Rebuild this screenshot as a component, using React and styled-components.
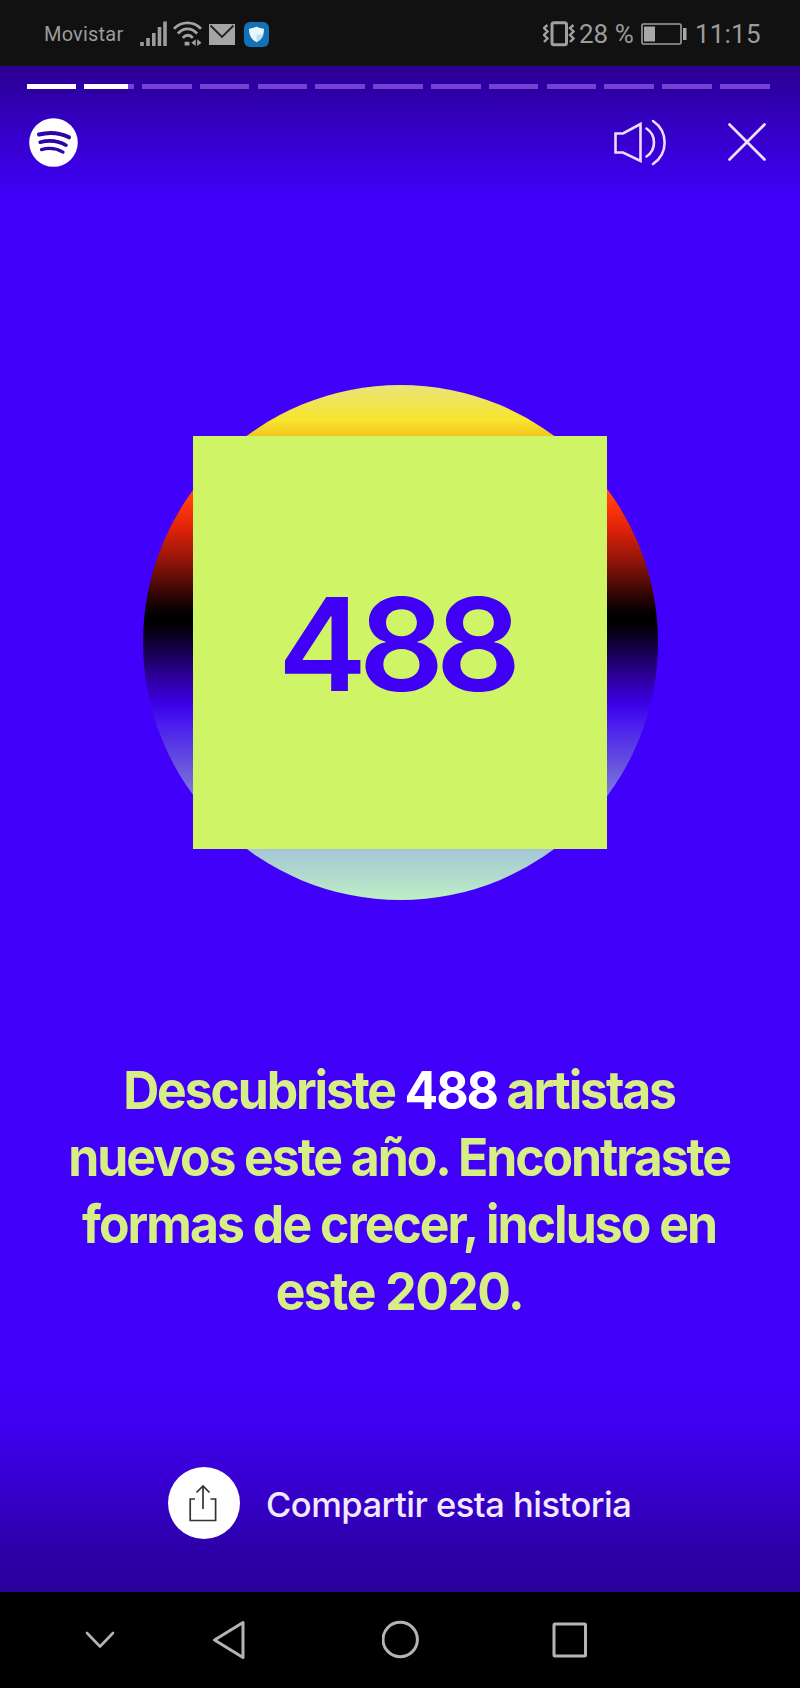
import React from "react";
import styled, { createGlobalStyle } from "styled-components";

const GlobalStyle = createGlobalStyle`
  * { box-sizing: border-box; }
  body { margin: 0; background: #000; }
`;

const Phone = styled.div`
  width: 800px;
  height: 1688px;
  display: flex;
  flex-direction: column;
  overflow: hidden;
  font-family: Inter, "Liberation Sans", sans-serif;
`;

const StatusBar = styled.header`
  height: 66px;
  flex: none;
  display: flex;
  align-items: center;
  justify-content: space-between;
  padding: 2px 37px 0 44px;
  background: #111;
  color: #9c9c9c;
  font-family: Roboto, sans-serif;
`;

const StatusGroup = styled.div`
  display: flex;
  align-items: center;
  gap: ${(p) => p.$gap}px;
`;

const Carrier = styled.span`
  width: 89px;
  font-size: 20px;
  line-height: 24px;
  letter-spacing: 0.2px;
`;

const StatusText = styled.span`
  width: ${(p) => p.$width}px;
  font-size: 26px;
  line-height: 30px;
  white-space: nowrap;
  letter-spacing: ${(p) => p.$spacing || 0}px;
`;

const Icon = styled.svg`
  display: block;
  flex: none;
  fill: none;
`;

const Story = styled.main`
  flex: 1;
  display: flex;
  flex-direction: column;
  align-items: center;
  background:
    linear-gradient(to bottom, #2a0092 0, #2d00a5 24px, #3700cf 75px, rgba(64, 0, 250, 0) 135px) top / 100% 135px no-repeat,
    linear-gradient(to top, #29009a 0, #2c00a8 40px, #3600cc 100px, #3e00ee 165px, rgba(64, 0, 250, 0) 215px) bottom / 100% 215px no-repeat,
    #4000fa;
`;

const Progress = styled.div`
  width: 743px;
  height: 5px;
  margin: 18px 4px 0 0;
  display: grid;
  grid-template-columns: repeat(13, 1fr);
  column-gap: 8.3px;
`;

const Segment = styled.div`
  background: linear-gradient(
    to right,
    #fff ${(p) => p.$fill}%,
    #7442d0 ${(p) => p.$fill}%
  );
`;

const Toolbar = styled.div`
  width: 100%;
  height: 49px;
  margin-top: 28.5px;
  padding: 0 34.5px 0 29px;
  display: flex;
  align-items: center;
`;

const Actions = styled.div`
  margin-left: auto;
  display: flex;
  align-items: center;
  gap: 61px;
`;

const Disc = styled.div`
  width: 515px;
  height: 515px;
  margin-top: 218px;
  padding-top: 1px;
  border-radius: 50%;
  display: flex;
  align-items: center;
  justify-content: center;
  background: linear-gradient(
    to bottom,
    #ebe37a 0%,
    #f7e52e 6.8%,
    #f4c51e 10%,
    #ff6a14 17%,
    #ff3a0c 23%,
    #e32408 27.5%,
    #8c1408 34.5%,
    #2c0503 41%,
    #000 44.5%,
    #000 46.5%,
    #12003c 50.5%,
    #2a0090 56%,
    #3d00e8 62%,
    #4a1eee 66%,
    #5c40e2 71%,
    #7468dc 77%,
    #a7c9d4 91%,
    #bdefc4 100%
  );
`;

const Card = styled.div`
  width: 414px;
  height: 413px;
  flex: none;
  display: flex;
  align-items: center;
  justify-content: center;
  background: #cff566;
`;

const Count = styled.span`
  color: #4000f5;
  font-size: 129px;
  line-height: 130px;
  font-weight: 630;
  letter-spacing: -8px;
  margin: 2px 0 0 -8px;
  transform: scaleX(1.035);
`;

const Message = styled.p`
  margin: 157px 0 0;
  text-align: center;
  color: #d6ee83;
  font-size: 52.5px;
  font-weight: 650;
  line-height: 67.3px;
`;

const Line = styled.span`
  display: block;
  white-space: nowrap;
  letter-spacing: ${(p) => p.$spacing}px;
  text-indent: ${(p) => p.$spacing}px;
  transform: scaleX(0.95);
`;

const Highlight = styled.strong`
  color: #fff;
  font-weight: 700;
`;

const ShareRow = styled.div`
  width: 100%;
  margin-top: auto;
  margin-bottom: 53px;
  padding-left: 168px;
  display: flex;
  align-items: center;
  gap: 26px;
`;

const ShareButton = styled.div`
  width: 72px;
  height: 72px;
  padding-right: 2px;
  border-radius: 50%;
  background: #fff;
  display: flex;
  align-items: center;
  justify-content: center;
`;

const ShareLabel = styled.span`
  color: #f3e9ff;
  font-size: 34.5px;
  font-weight: 500;
  line-height: 40px;
  letter-spacing: -0.5px;
  white-space: nowrap;
  padding-top: 3px;
`;

const NavBar = styled.nav`
  height: 96px;
  flex: none;
  padding: 0 0 1px 84px;
  display: flex;
  align-items: center;
  background: #000;
`;

const NavItem = styled.div`
  width: ${(p) => p.$width}px;
  display: flex;
`;

const BatteryIcon = styled(Icon)`
  margin-right: 2px;
`;

const VibrateIcon = styled(Icon)`
  margin-right: -2px;
`;

const ShieldIcon = styled(Icon)`
  margin-left: 2px;
`;

const wiggle = (x) => `M${x} 4 l-3.5 3 3.5 3.5 -3.5 3.5 3.5 3.5 -3.5 3.5`;

export default function App() {
  return (
    <>
      <GlobalStyle />
      <Phone>
        <StatusBar>
          <StatusGroup $gap={6.7}>
            <Carrier>Movistar</Carrier>
            <Icon width="27" height="26" viewBox="0 0 27 26" stroke="#9c9c9c" strokeWidth="3.6">
              <path d="M2 25v-4M8 25v-8M13.8 25V12M19.5 25V6M25 25V.5" />
            </Icon>
            <Icon width="29" height="26" viewBox="0 0 30 26" stroke="#a3a3a3" strokeWidth="2.9">
              <path d="M1 7.5C9-.5 21-.5 29 7.5M5 12.5c6-6.5 14-6.5 20 0M10 17c3.5-3.6 7.500-3.6 10.500 0" />
              <path d="M12 21h5v4h-5zM23.500 18.500v7l-4.500-3.500zM25 18.500v7l4.500-3.500z" fill="#a3a3a3" stroke="none" />
            </Icon>
            <Icon width="26" height="21" viewBox="0 0 26 21">
              <path fill="#a5a5a5" d="M0 0h26v21H0z" />
              <path stroke="#222" strokeWidth="1.800" d="M1.500 1.500 13 13 24.500 1.500" />
            </Icon>
            <ShieldIcon width="25" height="25" viewBox="0 0 25 25">
              <rect width="25" height="25" rx="6" fill="#1272b5" />
              <path fill="#e6f7ff" d="M12.500 4.500c2.500 1.500 5 2 7.500 2.200 0 6.300-2 10.500-7.500 13.500C7 17.200 5 13 5 6.700c2.500-.2 5-.7 7.500-2.200z" />
              <path fill="#b9e0f5" d="M12.500 12.500h7c-1 3.500-3.500 6-7 7.700z" />
            </ShieldIcon>
          </StatusGroup>
          <StatusGroup $gap={6}>
            <VibrateIcon width="32" height="26" viewBox="0 0 32 26" stroke="#a0a0a0">
              <rect x="9" y="1.800" width="14.500" height="22" rx="2" strokeWidth="3" />
              <path strokeWidth="2.400" d={wiggle(4.5)} />
              <path strokeWidth="2.400" d={wiggle(30.5)} />
            </VibrateIcon>
            <StatusText $width={56}>28 %</StatusText>
            <BatteryIcon width="46" height="22" viewBox="0 0 46 22" stroke="#a0a0a0">
              <rect x="1" y="1" width="39" height="20" rx="1.500" strokeWidth="1.600" />
              <path fill="#a8a8a8" stroke="none" d="M3 3.500h11v15H3zM42 5h3.500v12H42z" />
            </BatteryIcon>
            <StatusText $width={68} $spacing={0.2}>11:15</StatusText>
          </StatusGroup>
        </StatusBar>

        <Story>
          <Progress>
            {Array.from({ length: 13 }, (_, i) => (
              <Segment key={i} $fill={i === 0 ? 100 : i === 1 ? 89 : 0} />
            ))}
          </Progress>
          <Toolbar>
            <Icon width="49" height="49" viewBox="0 0 49 49" strokeLinecap="round">
              <circle cx="24.500" cy="24.500" r="24.300" fill="#fff" />
              <g stroke="#2c05a8">
                <path strokeWidth="4" d="M10 16.500c10.500-2.800 21-1.800 30 2.800" />
                <path strokeWidth="3.600" d="M11.200 24.300c9-2.500 18-1.500 25.800 2.900" />
                <path strokeWidth="3.200" d="M12.500 31.600c7.500-2.100 15-1.200 21.500 2.500" />
              </g>
            </Icon>
            <Actions>
              <Icon width="54" height="48" viewBox="0 0 54 48" stroke="#ebdcff" strokeWidth="2.600">
                <path d="M2.500 15.500H10L27.500 6v37L10 34.500H2.500z" />
                <path strokeLinecap="round" d="M33.500 10.500C43.500 17 43.500 32 33.500 38.500M40 3c15.500 10.500 15.500 32.500 0 43" />
              </Icon>
              <Icon width="38" height="38" viewBox="0 0 38 38" stroke="#efe2ff" strokeWidth="2.700" strokeLinecap="round">
                <path d="M1.500 1.500l35 35M36.500 1.500l-35 35" />
              </Icon>
            </Actions>
          </Toolbar>

          <Disc>
            <Card>
              <Count>488</Count>
            </Card>
          </Disc>

          <Message>
            <Line $spacing={-2.24}>
              Descubriste <Highlight>488</Highlight> artistas
            </Line>
            <Line $spacing={-2.17}>nuevos este año. Encontraste</Line>
            <Line $spacing={-2.03}>formas de crecer, incluso en</Line>
            <Line $spacing={-1.55}>este 2020.</Line>
          </Message>

          <ShareRow>
            <ShareButton>
              <Icon width="28" height="38" viewBox="0 0 28 38" stroke="#333" strokeWidth="1.700">
                <path d="M6 15H1.200v21.500h25.400V15H21.500M14 25V2M7.500 8.500 14 2l6.500 6.500" />
              </Icon>
            </ShareButton>
            <ShareLabel>Compartir esta historia</ShareLabel>
          </ShareRow>
        </Story>

        <NavBar>
          <NavItem $width={128}>
            <Icon width="32" height="38" viewBox="0 0 32 38" stroke="#b4b4b4" strokeWidth="2.600" strokeLinecap="round" strokeLinejoin="round">
              <path d="M3 12l13 13.500L29 12" />
            </Icon>
          </NavItem>
          <NavItem $width={170}>
            <Icon width="34" height="40" viewBox="0 0 34 40" stroke="#b4b4b4" strokeWidth="3" strokeLinejoin="round">
              <path d="M2.500 20 31 2.500v35z" />
            </Icon>
          </NavItem>
          <NavItem $width={170}>
            <Icon width="37" height="39" viewBox="0 0 37 39" stroke="#b4b4b4" strokeWidth="3">
              <circle cx="18.200" cy="19.500" r="17.200" />
            </Icon>
          </NavItem>
          <NavItem $width={40}>
            <Icon width="36" height="36" viewBox="0 0 36 36" stroke="#b4b4b4" strokeWidth="3">
              <rect x="2" y="2" width="31.500" height="32" rx="1" />
            </Icon>
          </NavItem>
        </NavBar>
      </Phone>
    </>
  );
}
